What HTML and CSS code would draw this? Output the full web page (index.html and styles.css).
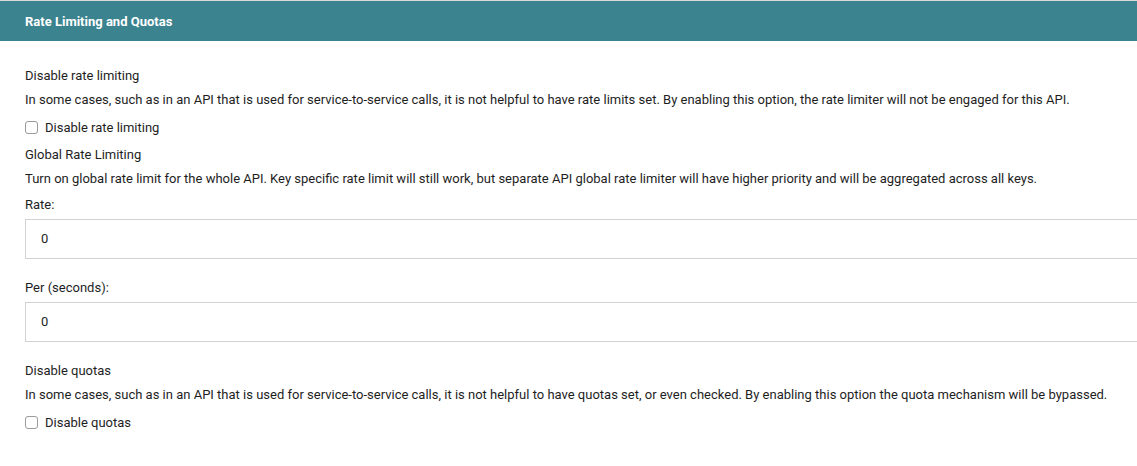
FILE: index.html
```html
<!DOCTYPE html>
<html>
<head>
<meta charset="utf-8">
<link rel="stylesheet" href="styles.css">
</head>
<body>
<div class="page">
  <div class="panel-header">Rate Limiting and Quotas</div>
  <div class="panel-body">
    <div class="field-title">Disable rate limiting</div>
    <div class="field-desc">In some cases, such as in an API that is used for service-to-service calls, it is not helpful to have rate limits set. By enabling this option, the rate limiter will not be engaged for this API.</div>
    <label class="check-row"><span class="checkbox"></span>Disable rate limiting</label>

    <div class="field-title mt-section">Global Rate Limiting</div>
    <div class="field-desc">Turn on global rate limit for the whole API. Key specific rate limit will still work, but separate API global rate limiter will have higher priority and will be aggregated across all keys.</div>
    <div class="input-label mt-label">Rate:</div>
    <div class="text-input">0</div>
    <div class="input-label mt-after-input">Per (seconds):</div>
    <div class="text-input">0</div>

    <div class="field-title mt-after-input">Disable quotas</div>
    <div class="field-desc">In some cases, such as in an API that is used for service-to-service calls, it is not helpful to have quotas set, or even checked. By enabling this option the quota mechanism will be bypassed.</div>
    <label class="check-row"><span class="checkbox"></span>Disable quotas</label>
  </div>
</div>
</body>
</html>
```
FILE: styles.css
```css
html, body {
  margin: 0;
  padding: 0;
  background: #ffffff;
  overflow: hidden;
}
body {
  font-family: Roboto, "Liberation Sans", Arial, sans-serif;
  font-size: 13px;
  color: #1e1e1e;
}
.page {
  border-top: 1px solid #d9d9d9;
}
.panel-header {
  background: #3a838f;
  color: #ffffff;
  font-weight: 700;
  font-size: 13px;
  height: 40px;
  line-height: 41px;
  padding-left: 25px;
}
.panel-body {
  padding: 23px 0 0 25px;
  display: flex;
  flex-direction: column;
  align-items: flex-start;
}
.field-title,
.field-desc,
.input-label {
  line-height: 24px;
  white-space: nowrap;
}
.check-row {
  display: flex;
  align-items: center;
  gap: 7px;
  height: 24px;
  margin-top: 3px;
}
.checkbox {
  width: 11px;
  height: 11px;
  border: 1px solid #9a9a9a;
  border-radius: 3px;
  background: #ffffff;
}
.mt-section {
  margin-top: 4px;
}
.mt-label {
  margin-top: 2px;
}
.mt-after-input {
  margin-top: 17px;
}
.text-input {
  box-sizing: border-box;
  align-self: stretch;
  margin-top: 2px;
  margin-right: -20px;
  height: 40px;
  line-height: 38px;
  border: 1px solid #d2d2d2;
  padding-left: 15px;
  color: #1e1e1e;
}
```
